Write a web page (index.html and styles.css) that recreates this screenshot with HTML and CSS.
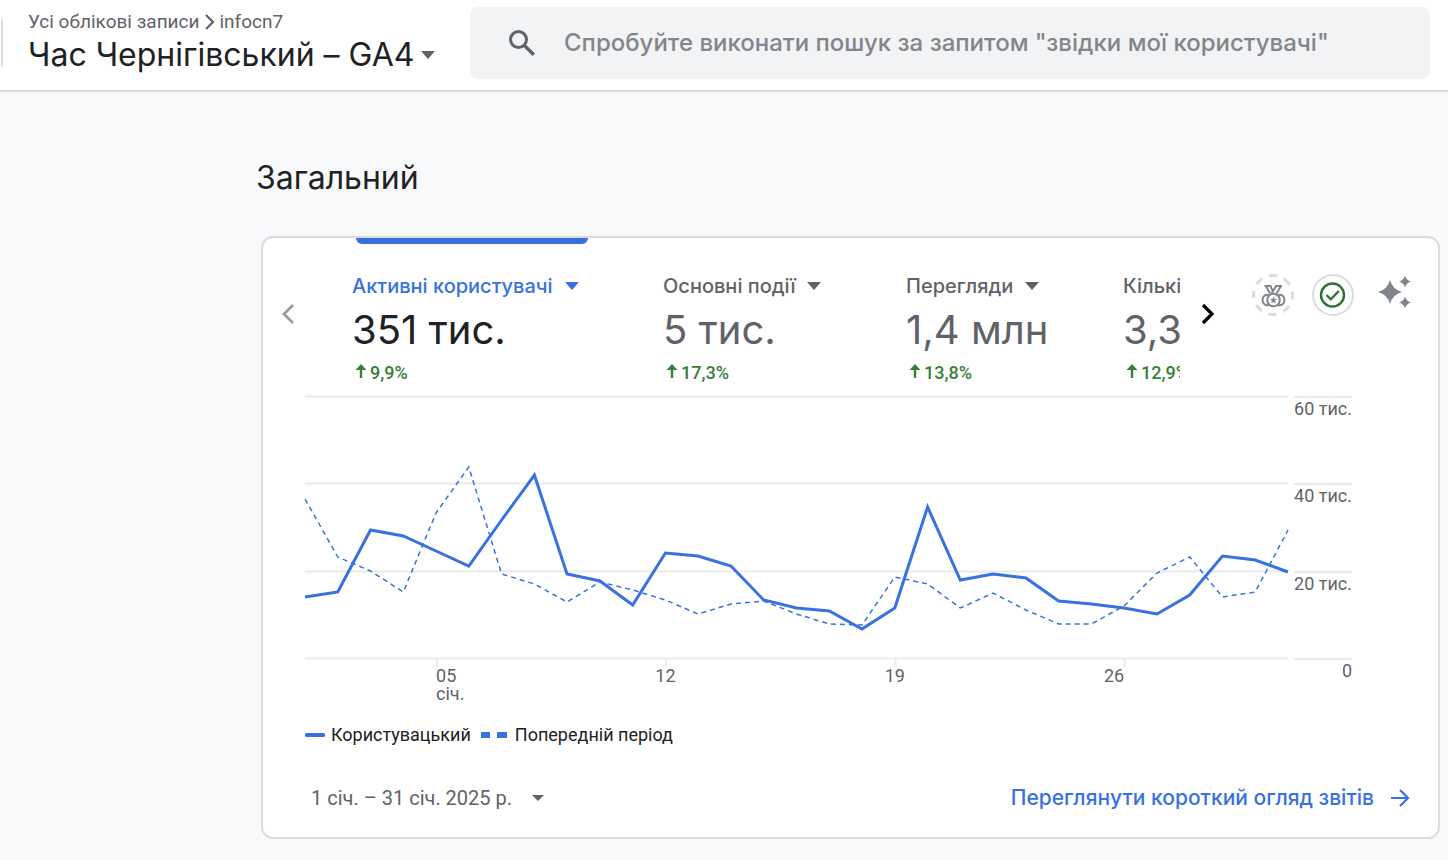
FILE: index.html
```html
<!DOCTYPE html>
<html lang="uk">
<head>
<meta charset="utf-8">
<meta name="viewport" content="width=device-width, initial-scale=1">
<title>Час Чернігівський – GA4</title>
<link rel="stylesheet" href="styles.css">
</head>
<body>
<header class="topbar">
  <div class="property">
    <nav class="breadcrumb" aria-label="Обліковий запис">
      <a href="#">Усі облікові записи</a>
      <svg width="10" height="16" viewBox="0 0 10 16" aria-hidden="true"><path d="M1 1 8 8l-7 7" fill="none" stroke="#5f6368" stroke-width="2.200"/></svg>
      <a href="#">infocn7</a>
    </nav>
    <button class="property-name" type="button">Час Чернігівський – GA4
      <svg width="14" height="8" viewBox="0 0 14 8" aria-hidden="true"><path d="M0 0h14L7 8z" fill="#5f6368"/></svg>
    </button>
  </div>
  <label class="search">
    <svg width="28" height="28" viewBox="0 0 28 28" aria-hidden="true"><circle cx="10.500" cy="10.500" r="8" fill="none" stroke="#5f6368" stroke-width="3"/><path d="m16.500 16.500 9.300 9.300" stroke="#5f6368" stroke-width="3.400"/></svg>
    <input type="search" aria-label="Пошук" placeholder='Спробуйте виконати пошук за запитом "звідки мої користувачі"'>
  </label>
</header>

<main class="page">
  <h1 class="page-title">Загальний</h1>
  <section class="card">
    <div class="card-top">
      <button class="scroll prev" type="button" aria-label="Назад"><svg width="14" height="22" viewBox="0 0 14 22" aria-hidden="true"><path d="M12 2 3 11l9 9" fill="none" stroke="#9a9a9a" stroke-width="2.800"/></svg></button>
      <div class="metrics">
        <button class="metric active" type="button">
          <span class="metric-label">Активні користувачі <svg width="14" height="8" viewBox="0 0 14 8" aria-hidden="true"><path d="M0 0h14L7 8z" fill="currentColor"/></svg></span>
          <span class="metric-value">351 тис.</span>
          <span class="metric-delta"><svg width="12" height="18" viewBox="0 0 12 18" aria-hidden="true"><path d="M6 0 11.500 6H7.200v8H4.800V6H.5z" fill="currentColor"/></svg>9,9%</span>
        </button>
        <button class="metric" type="button">
          <span class="metric-label">Основні події <svg width="14" height="8" viewBox="0 0 14 8" aria-hidden="true"><path d="M0 0h14L7 8z" fill="currentColor"/></svg></span>
          <span class="metric-value">5 тис.</span>
          <span class="metric-delta"><svg width="12" height="18" viewBox="0 0 12 18" aria-hidden="true"><path d="M6 0 11.500 6H7.200v8H4.800V6H.5z" fill="currentColor"/></svg>17,3%</span>
        </button>
        <button class="metric narrow" type="button">
          <span class="metric-label">Перегляди <svg width="14" height="8" viewBox="0 0 14 8" aria-hidden="true"><path d="M0 0h14L7 8z" fill="currentColor"/></svg></span>
          <span class="metric-value">1,4 млн</span>
          <span class="metric-delta"><svg width="12" height="18" viewBox="0 0 12 18" aria-hidden="true"><path d="M6 0 11.500 6H7.200v8H4.800V6H.5z" fill="currentColor"/></svg>13,8%</span>
        </button>
        <button class="metric last" type="button">
          <span class="metric-label">Кількі</span>
          <span class="metric-value">3,3</span>
          <span class="metric-delta"><svg width="12" height="18" viewBox="0 0 12 18" aria-hidden="true"><path d="M6 0 11.500 6H7.200v8H4.800V6H.5z" fill="currentColor"/></svg>12,9%</span>
        </button>
      </div>
      <button class="scroll next" type="button" aria-label="Далі"><svg width="14" height="22" viewBox="0 0 14 22" aria-hidden="true"><path d="m2 2 9 9-9 9" fill="none" stroke="#000" stroke-width="3.200"/></svg></button>
      <div class="actions">
        <button type="button" aria-label="Порівняльний аналіз">
          <svg width="42" height="42" viewBox="0 0 42 42" aria-hidden="true">
            <circle cx="21" cy="21" r="19.500" fill="none" stroke="#dadce0" stroke-width="3" stroke-dasharray="8.300 7.017" stroke-dashoffset="4.150" transform="rotate(180 21 21)"/>
            <g fill="none" stroke="#80868b" stroke-width="2">
              <path d="M12.500 12h6l2.800 6.500M30 12h-6l-4.500 8M14 12l4 7.500M29 12l-4.500 7.500"/>
              <circle cx="21.500" cy="26" r="6.300"/>
              <path d="M16.500 21c-3-1-6 1.500-6 5s3 6 6.500 5M26.500 21c3-1 6 1.500 6 5s-3 6-6.500 5"/>
            </g>
            <path d="m21.500 22.300 1 2.600 2.700.1-2.100 1.700.7 2.700-2.300-1.500-2.300 1.500.7-2.700-2.100-1.700 2.700-.1z" fill="#80868b"/>
          </svg>
        </button>
        <button type="button" aria-label="Якість даних">
          <svg width="42" height="42" viewBox="0 0 42 42" aria-hidden="true">
            <circle cx="21" cy="21" r="20" fill="none" stroke="#dadce0" stroke-width="2"/>
            <circle cx="20.500" cy="21" r="11.500" fill="none" stroke="#2e7336" stroke-width="2.400"/>
            <path d="m14.500 21 4.300 4.300 8-8.300" fill="none" stroke="#2e7336" stroke-width="2.400"/>
          </svg>
        </button>
        <button type="button" aria-label="Статистика">
          <svg width="42" height="42" viewBox="0 0 42 42" aria-hidden="true" fill="#80868b">
            <path d="M18 6q2.500 9.500 12 12-9.500 2.500-12 12-2.500-9.500-12-12 9.500-2.500 12-12z"/>
            <path d="M33 1.500q1.300 4.700 6 6-4.700 1.300-6 6-1.300-4.700-6-6 4.700-1.300 6-6zM33 22.500q1.300 4.700 6 6-4.700 1.300-6 6-1.300-4.700-6-6 4.700-1.300 6-6z"/>
          </svg>
        </button>
      </div>
    </div>

    <div class="chart">
      <div class="plot">
        <svg class="lines" viewBox="0 0 983 271" preserveAspectRatio="none" role="img" aria-label="Активні користувачі за день">
          <g class="grid"><path d="M0 .5H983M0 87.500H983M0 175.500H983M0 262.500H983M132 263v8M361 263v8M590.500 263v8M819.500 263v8"/></g>
          <polyline class="previous" points="0,103 32.800,161 65.500,175 98.300,196 131,117 163.800,71 196.600,178 229.400,188 262,206 295,186 327.700,194 360.400,204 393,218 426,208 458.700,205 491.500,218 524.300,228 557,229 589.800,181 622.600,188 655.300,212 688,197 721,214 753.600,228 786.400,228 819,210 852,177 884.700,161 917.500,201 950.200,196 983,134"/>
          <polyline class="current" points="0,201 32.800,196 65.500,134 98.300,140 131,155 163.800,170 196.600,124 229.400,79 262,178 295,185 327.700,209 360.400,157 393,160 426,170 458.700,204 491.500,212 524.300,215 557,233 589.800,212 622.600,111 655.300,184 688,178 721,182 753.600,205 786.400,208 819,212 852,218 884.700,199 917.500,160 950.200,164 983,176"/>
        </svg>
        <div class="x-axis">
          <span class="tick-start">05<br>січ.</span>
          <span class="tick-mid">12</span>
          <span class="tick-mid">19</span>
          <span class="tick-end">26</span>
        </div>
      </div>
      <div class="y-axis"><span>60 тис.</span><span>40 тис.</span><span>20 тис.</span><span>0</span></div>
    </div>

    <div class="legend">
      <svg width="20" height="4" viewBox="0 0 20 4" aria-hidden="true"><rect width="20" height="4" rx="1.500" fill="#3871e0"/></svg>
      <span>Користувацький</span>
      <svg class="legend-dash" width="26" height="6" viewBox="0 0 26 6" aria-hidden="true"><path d="M0 0h9v6H0zM16 0h10v6H16z" fill="#3871e0"/></svg>
      <span>Попередній період</span>
    </div>

    <div class="card-bottom">
      <button class="date-range" type="button">1 січ. – 31 січ. 2025 р.
        <svg width="12" height="6" viewBox="0 0 12 6" aria-hidden="true"><path d="M0 0h12L6 6z" fill="#5f6368"/></svg>
      </button>
      <a class="report-link" href="#">Переглянути короткий огляд звітів
        <svg width="20" height="18" viewBox="0 0 20 18" aria-hidden="true"><path d="M1 9h17M10 1l8 8-8 8" fill="none" stroke="#3871e0" stroke-width="2.200"/></svg>
      </a>
    </div>
  </section>
</main>
</body>
</html>
```
FILE: styles.css
```css
:root {
  --display: Inter, Roboto, sans-serif;
  --blue: #3871e0;
  --grey: #5f6368;
  --line: #dadce0;
}

* { box-sizing: border-box; }

body {
  margin: 0;
  min-height: 100vh;
  background: #f8f9fb;
  color: #202124;
  font-family: Roboto, sans-serif;
}

button {
  padding: 0;
  border: 0;
  background: none;
  color: inherit;
  font: inherit;
  text-align: left;
  cursor: pointer;
}

a { color: inherit; text-decoration: none; }
svg { flex: none; display: block; }

.topbar {
  display: flex;
  align-items: flex-start;
  gap: 36px;
  padding: 7px 18px 11px 1px;
  border-bottom: 2px solid var(--line);
  background: #fff;
}

.property {
  flex: none;
  width: 433px;
  height: 48px;
  margin-top: 12px;
  padding: 2px 0 0 25px;
  border-left: 2px solid var(--line);
  display: flex;
  flex-direction: column;
  justify-content: center;
}

.breadcrumb {
  display: flex;
  align-items: center;
  gap: 5px;
  color: var(--grey);
  font-size: 19px;
  line-height: 22px;
}

.property-name {
  display: flex;
  align-items: center;
  gap: 6px;
  font-family: var(--display);
  font-size: 32px;
  line-height: 44px;
  white-space: nowrap;
}

.search {
  flex: 1;
  display: flex;
  align-items: center;
  gap: 28px;
  height: 72px;
  padding: 0 38px;
  border-radius: 8px;
  background: #f1f3f4;
}

.search input {
  flex: 1;
  min-width: 0;
  padding: 0;
  border: 0;
  outline: 0;
  background: none;
  font: 500 24px/34px var(--display);
}

.search input::placeholder { color: #80868b; opacity: 1; }

.page { padding: 64px 8px 20px 256px; }

.page-title {
  margin: 0 0 36px;
  font: 400 32px/44px var(--display);
}

.card {
  margin-left: 5px;
  padding: 0 28px 19px 18px;
  border: 2px solid var(--line);
  border-radius: 12px;
  background: #fff;
}

.card-top { display: flex; margin-right: -4px; }

.scroll {
  flex: none;
  width: 14px;
  height: 22px;
  margin-top: 65px;
}

.metrics {
  flex: 1;
  display: flex;
  min-width: 0;
  margin: 0 21px 0 57px;
  overflow: hidden;
}

.metric {
  flex: none;
  display: flex;
  flex-direction: column;
  align-items: flex-start;
  width: 243px;
  height: 158px;
  padding-top: 36px;
  position: relative;
  color: var(--grey);
  white-space: nowrap;
}

.metric.active { width: 311px; color: #202124; }
.metric.narrow { width: 217px; }
.metric.last { width: 100px; }

.metric.active::before {
  content: "";
  position: absolute;
  top: 0;
  left: 4px;
  width: 232px;
  height: 6px;
  border-radius: 0 0 6px 6px;
  background: var(--blue);
}

.metric-label {
  display: flex;
  align-items: center;
  gap: 12px;
  font: 500 20px/24px var(--display);
}

.metric.active .metric-label { color: var(--blue); }
.metric-value { font: 400 40px/48px var(--display); margin-top: 8px; }

.metric-delta {
  display: flex;
  align-items: center;
  gap: 3px;
  margin-top: 8px;
  padding-left: 3px;
  color: #378039;
  font-weight: 500;
  font-size: 18px;
  line-height: 22px;
}

.actions {
  flex: none;
  display: flex;
  align-items: flex-start;
  gap: 18px;
  margin: 36px 0 0 37px;
}

.chart {
  display: flex;
  gap: 6px;
  margin: 0 58px 0 24px;
}

.plot { flex: 1; min-width: 0; }
.lines { width: 100%; height: 271px; overflow: visible; }
.lines * { vector-effect: non-scaling-stroke; }
.grid { fill: none; stroke: #ebebeb; stroke-width: 2; }
.current { fill: none; stroke: var(--blue); stroke-width: 3; }
.previous { fill: none; stroke: var(--blue); stroke-width: 1.5; stroke-dasharray: 5 4; }

.x-axis {
  display: grid;
  grid-template-columns: 8fr 7fr 14fr 14fr 7fr 10fr;
  color: var(--grey);
  font-size: 18px;
  line-height: 18px;
}

.tick-start { grid-column: 2; }
.tick-mid { text-align: center; }
.tick-end { text-align: right; }

.y-axis {
  flex: none;
  width: 58px;
  display: grid;
  grid-template-rows: 87px 88px 87px auto;
  align-self: flex-start;
  color: var(--grey);
  font-size: 18px;
  line-height: 22px;
  text-align: right;
  white-space: nowrap;
}

.y-axis span { border-top: 2px solid #ebebeb; }

.legend {
  display: flex;
  align-items: center;
  gap: 6px;
  margin: 20px 0 0 24px;
  font-size: 18px;
  line-height: 24px;
}

.legend-dash { margin: 0 2px 0 4px; }

.card-bottom {
  display: flex;
  align-items: center;
  justify-content: space-between;
  gap: 24px;
  margin: 31px 0 0 30px;
}

.date-range {
  display: flex;
  align-items: center;
  gap: 20px;
  color: var(--grey);
  font-size: 20px;
  line-height: 40px;
}

.report-link {
  display: flex;
  align-items: center;
  gap: 16px;
  color: var(--blue);
  font: 500 21px/40px var(--display);
}
```
